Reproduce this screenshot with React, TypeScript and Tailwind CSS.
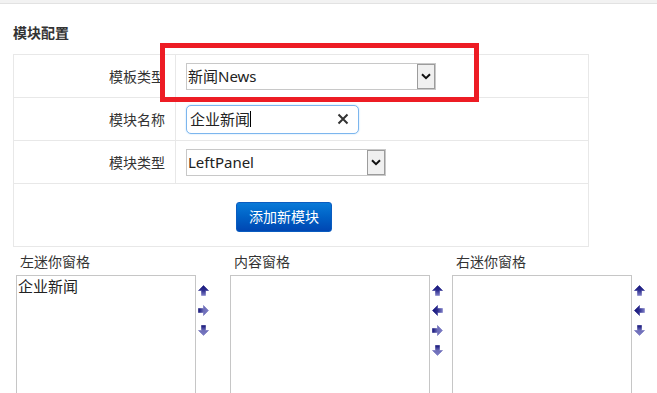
import React from "react";

const font = { fontFamily: '"Noto Sans", "Noto Sans CJK SC", sans-serif' };

type Dir = "up" | "down" | "left" | "right";

// small pixel-style move arrows beside the list boxes
function MoveArrow({ dir }: { dir: Dir }) {
  const rot = { up: 0, right: 90, down: 180, left: 270 }[dir];
  const id = `g-${dir}`;
  const dark = dir === "up" || dir === "left";
  return (
    <svg width="11" height="11" viewBox="0 0 11 11" className="block">
      <defs>
        <linearGradient id={id} x1="0" y1="0" x2="0" y2="1">
          <stop offset="0" stopColor={dark ? "#15157a" : "#7c7cc4"} />
          <stop offset="0.5" stopColor={dark ? "#2e2e90" : "#6c6cb8"} />
          <stop offset="1" stopColor={dark ? "#7c7cc4" : "#15157a"} />
        </linearGradient>
      </defs>
      <g transform={`rotate(${rot} 5.5 5.5)`}>
        <polygon
          points="5.5,0.5 10.5,5.5 7.5,5.5 7.5,10.5 3.5,10.5 3.5,5.5 0.5,5.5"
          fill={`url(#${id})`}
          stroke={`url(#${id})`}
          strokeWidth="0.6"
        />
      </g>
    </svg>
  );
}

function Chevron() {
  return (
    <svg width="10" height="7" viewBox="0 0 10 7">
      <polyline points="1,1.2 5,5.2 9,1.2" fill="none" stroke="#111" strokeWidth="2" />
    </svg>
  );
}

function Select({ value, width }: { value: string; width: string }) {
  return (
    <div className={`flex h-[27px] ${width} border border-[#c8c8c8] bg-white`}>
      <div className="flex-1 flex items-center pl-[1px] text-[15px] text-[#222] leading-none">
        {value}
      </div>
      <div className="w-[18px] h-full border border-[#9c9c9c] bg-[#f0f0f0] flex items-center justify-center">
        <Chevron />
      </div>
    </div>
  );
}

function Row({ label, children }: { label: string; children: React.ReactNode }) {
  return (
    <div className="flex h-[43px] border-b border-[#e8e8e8]">
      <div className="w-[162px] border-r border-[#e8e8e8] flex items-center justify-end pr-[10px] text-[14px] text-[#333]">
        {label}
      </div>
      <div className="flex-1 flex items-center pl-[10px]">{children}</div>
    </div>
  );
}

function ListPane({
  label,
  width,
  groupWidth,
  arrows,
  items = [],
}: {
  label: string;
  width: string;
  groupWidth: string;
  arrows: Dir[];
  items?: string[];
}) {
  return (
    <div className={`${groupWidth} shrink-0`}>
      <div className="h-[20px] leading-[20px] pl-[4px] text-[14px] text-[#333]">{label}</div>
      <div className="flex mt-[3px]">
        <div className={`${width} h-[140px] border border-[#c6c6c6] bg-white px-[1px] text-[15px] text-[#222] leading-[20px]`}>
          {items.map((it) => (
            <div key={it}>{it}</div>
          ))}
        </div>
        <div className="flex flex-col gap-[9px] pt-[10px] ml-[2px]">
          {arrows.map((d, i) => (
            <MoveArrow key={i} dir={d} />
          ))}
        </div>
      </div>
    </div>
  );
}

export default function App() {
  return (
    <div className="w-[657px] h-[393px] bg-white overflow-hidden relative" style={font}>
      <div className="h-[4px] bg-[#f2f2f2] border-b border-[#e2e2e2]" />
      <div className="pl-[13px]">
        <div className="mt-[19px] h-[20px] leading-[20px] text-[14px] font-bold text-[#333]">
          模块配置
        </div>
        <div className="mt-[11px] w-[576px] border border-[#e8e8e8]">
          <Row label="模板类型">
            <Select value="新闻News" width="w-[250px]" />
          </Row>
          <Row label="模块名称">
            <div className="flex items-center h-[29px] w-[173px] border border-[#7cb6ee] rounded-[5px] bg-white pl-[3px] pr-[9px] shadow-[0_0_2px_#b9dcfb]">
              <span className="text-[15px] text-[#222] leading-none">企业新闻</span>
              <span className="w-[1px] h-[16px] bg-black" />
              <span className="flex-1" />
              <svg width="12" height="12" viewBox="0 0 12 12">
                <path d="M1.5 1.5 L10.5 10.5 M10.5 1.5 L1.5 10.5" stroke="#333" strokeWidth="2" />
              </svg>
            </div>
          </Row>
          <Row label="模块类型">
            <Select value="LeftPanel" width="w-[200px]" />
          </Row>
          <div className="h-[62px] pt-[18px] pl-[222px]">
            <button className="w-[96px] h-[30px] rounded-[3px] bg-gradient-to-b from-[#0a7ad8] to-[#0046b2] border border-[#0a5cc0] text-white text-[14px] leading-none">
              添加新模块
            </button>
          </div>
        </div>
        <div className="flex mt-[5px] pl-[3px]">
          <ListPane
            label="左迷你窗格"
            width="w-[180px]"
            groupWidth="w-[214px]"
            arrows={["up", "right", "down"]}
            items={["企业新闻"]}
          />
          <ListPane
            label="内容窗格"
            width="w-[200px]"
            groupWidth="w-[222px]"
            arrows={["up", "left", "right", "down"]}
          />
          <ListPane
            label="右迷你窗格"
            width="w-[180px]"
            groupWidth="w-[200px]"
            arrows={["up", "left", "down"]}
          />
        </div>
      </div>
      {/* red annotation box */}
      <div className="absolute left-[160px] top-[43px] w-[319px] h-[59px] border-[5px] border-[#ed1c24] pointer-events-none" />
    </div>
  );
}
